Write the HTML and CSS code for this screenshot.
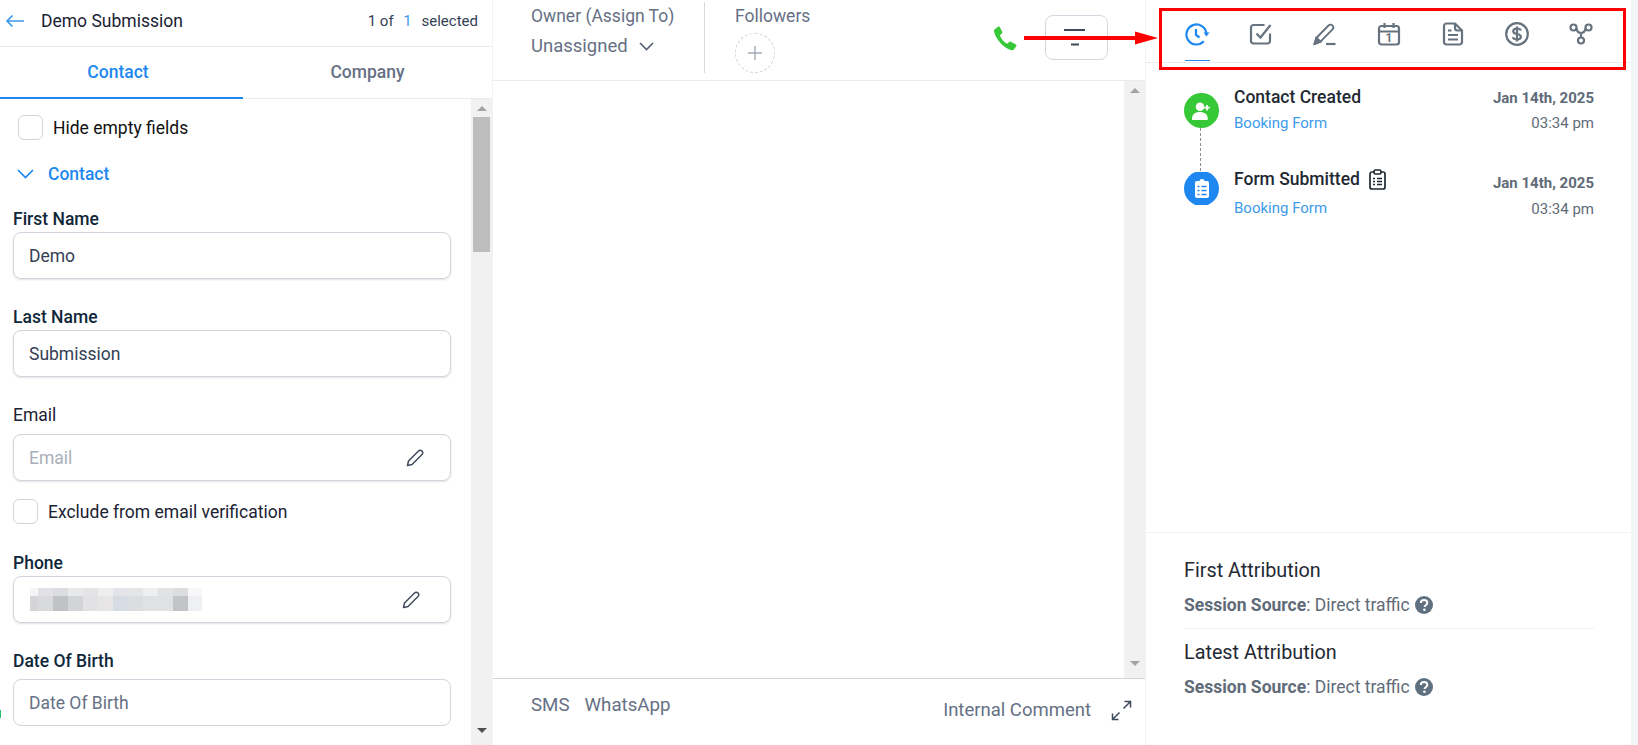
FILE: index.html
```html
<!DOCTYPE html>
<html lang="en">
<head>
    <meta charset="UTF-8">
    <meta name="viewport" content="width=device-width, initial-scale=1.0">
    <title>Contact Details</title>
    <link rel="stylesheet" href="styles.css">
</head>
<body>
    <div class="page">
        <!-- Left column: contact form -->
        <aside class="contact-panel">
            <div class="contact-header">
                <svg class="back-icon" width="20" height="14" viewBox="0 0 20 14"><path d="M19 7H2M7.500 1.500 2 7l5.500 5.500" fill="none" stroke="#3d9be9" stroke-width="1.700"/></svg>
                <div class="contact-name">Demo Submission</div>
                <div class="selected-count">1 of <span class="selected-total">1</span> selected</div>
            </div>
            <div class="contact-tabs">
                <div class="contact-tab contact-tab-active">Contact</div>
                <div class="contact-tab">Company</div>
            </div>
            <div class="form-wrap">
                <div class="form-scroll">
                    <div class="hide-row">
                        <span class="checkbox"></span>
                        <span>Hide empty fields</span>
                    </div>
                    <div class="section-toggle">
                        <svg width="17" height="10" viewBox="0 0 17 10"><path d="M1 1l7.500 7.500L16 1" fill="none" stroke="#1e88f0" stroke-width="1.700"/></svg>
                        <span>Contact</span>
                    </div>
                    <div class="field field-first">
                        <div class="field-label">First Name</div>
                        <div class="field-input">Demo</div>
                    </div>
                    <div class="field field-last">
                        <div class="field-label">Last Name</div>
                        <div class="field-input">Submission</div>
                    </div>
                    <div class="field field-email">
                        <div class="field-label field-label-plain">Email</div>
                        <div class="field-input field-empty">
                            <span>Email</span>
                            <svg width="20" height="20" viewBox="0 0 20 20"><path d="M2.500 17.500l1-4.500L13.500 3c1-1 2.500-1 3.500 0s1 2.500 0 3.500L7 16.500z" fill="none" stroke="#3f4a5a" stroke-width="1.500" stroke-linejoin="round"/></svg>
                        </div>
                    </div>
                    <div class="verify-row">
                        <span class="checkbox"></span>
                        <span>Exclude from email verification</span>
                    </div>
                    <div class="field field-phone">
                        <div class="field-label">Phone</div>
                        <div class="field-input field-phone-input">
                            <span class="phone-blur"></span>
                            <svg width="20" height="20" viewBox="0 0 20 20"><path d="M2.500 17.500l1-4.500L13.500 3c1-1 2.500-1 3.500 0s1 2.500 0 3.500L7 16.500z" fill="none" stroke="#3f4a5a" stroke-width="1.500" stroke-linejoin="round"/></svg>
                        </div>
                    </div>
                    <div class="field field-dob">
                        <div class="field-label">Date Of Birth</div>
                        <div class="field-input field-date">Date Of Birth</div>
                    </div>
                </div>
                <div class="scrollbar scrollbar-form">
                    <span class="scroll-up"></span>
                    <span class="scroll-thumb"></span>
                    <span class="scroll-down"></span>
                </div>
            </div>
        </aside>

        <!-- Middle column: conversation -->
        <main class="chat-panel">
            <div class="chat-header">
                <div class="owner">
                    <div class="owner-label">Owner (Assign To)</div>
                    <div class="owner-value">
                        <span>Unassigned</span>
                        <svg width="15" height="9" viewBox="0 0 15 9"><path d="M1 1l6.500 6.500L14 1" fill="none" stroke="#56616f" stroke-width="1.600"/></svg>
                    </div>
                </div>
                <div class="followers">
                    <div class="owner-label">Followers</div>
                    <div class="follower-add">
                        <svg width="14" height="14" viewBox="0 0 14 14"><path d="M7 0v14M0 7h14" stroke="#a3aab6" stroke-width="1.400"/></svg>
                    </div>
                </div>
                <svg class="call-icon" width="25" height="25" viewBox="0 0 25 25"><path d="M1.500 3.500 5 .8c.8-.5 1.500-.3 1.900.5l2.300 4.500c.3.700.2 1.300-.4 1.800L6.900 9.200c1 3.200 4 7 7.300 8.600l1.900-1.800c.6-.5 1.200-.6 1.800-.2l4.900 2.600c.8.400.9 1.200.4 1.900l-2.400 3.300c-.5.700-1.300.9-2.200.7C10.500 21.800 2.900 13.300 1 5.400c-.1-.8 0-1.400.5-1.900z" fill="#37c837"/></svg>
                <div class="filter-btn">
                    <svg width="22" height="17" viewBox="0 0 22 17"><path d="M0 1h21M7 15.500h8" stroke="#3f4a5a" stroke-width="2"/></svg>
                </div>
            </div>
            <div class="chat-body">
                <div class="chat-messages"></div>
                <div class="scrollbar scrollbar-chat">
                    <span class="scroll-up"></span>
                    <span class="scroll-down"></span>
                </div>
            </div>
            <div class="chat-footer">
                <div class="channel-list">
                    <span>SMS</span>
                    <span>WhatsApp</span>
                </div>
                <div class="comment-link">Internal Comment</div>
                <svg class="expand-icon" width="21" height="21" viewBox="0 0 21 21"><path d="M13.500 1.500h6v6M19.500 1.500l-7 7M7.500 19.500h-6v-6M1.500 19.500l7-7" fill="none" stroke="#3f4a5a" stroke-width="1.500"/></svg>
            </div>
        </main>

        <!-- Right column: activity -->
        <section class="activity-panel">
            <div class="activity-tabs">
                <div class="activity-tab activity-tab-active">
                    <svg width="26" height="26" viewBox="0 0 26 26" fill="none" stroke="#1e88f0" stroke-width="2.200"><path d="M19.800 19.300A10 10 0 1 1 22.400 11.500"/><path d="M12 7v6l3.500 2.500"/><path d="M19.500 10.500h6l-3 4z" fill="#1e88f0" stroke="none"/></svg>
                </div>
                <div class="activity-tab">
                    <svg width="24" height="24" viewBox="0 0 24 24" fill="none" stroke="#66727e" stroke-width="2.200"><path d="M21 11.500V19a2.500 2.500 0 0 1-2.500 2.500H4.500A2.500 2.500 0 0 1 2 19V5.500A2.500 2.500 0 0 1 4.500 3h11"/><path d="M7.500 11.500l4 4L21.500 3"/></svg>
                </div>
                <div class="activity-tab">
                    <svg width="24" height="24" viewBox="0 0 24 24" fill="none" stroke="#66727e" stroke-width="1.900"><path d="M1.500 22l1.800-6L15.500 3.500c1.200-1.200 3-1.200 4 0s1 2.800 0 3.800L7.500 19.700z" stroke-linejoin="round"/><path d="M3.300 16l4.200 3.700"/><path d="M1.500 22l1.800-6 4.200 3.700z" fill="#66727e"/><path d="M13 22h9.500" stroke-width="2.200"/></svg>
                </div>
                <div class="activity-tab">
                    <svg width="24" height="24" viewBox="0 0 24 24" fill="none" stroke="#66727e" stroke-width="2.200"><rect x="2" y="4" width="20" height="18.500" rx="2.500"/><path d="M2 9.500h20M7.500 1v5M16.500 1v5"/><text x="12" y="19.800" text-anchor="middle" class="calendar-day">1</text></svg>
                </div>
                <div class="activity-tab">
                    <svg width="24" height="24" viewBox="0 0 24 24" fill="none" stroke="#66727e" stroke-width="2.200"><path d="M5.500 1.500H14l7 7v11.500a2.500 2.500 0 0 1-2.500 2.500h-13A2.500 2.500 0 0 1 3 20V4a2.500 2.500 0 0 1 2.500-2.500z" stroke-linejoin="round"/><path d="M14 1.500V6a2.500 2.500 0 0 0 2.500 2.500H21M7 8.500h3.500M7 13h10M7 17.500h10"/></svg>
                </div>
                <div class="activity-tab">
                    <svg width="24" height="24" viewBox="0 0 24 24" fill="none" stroke="#66727e" stroke-width="2.200"><circle cx="12" cy="12" r="10.800"/><path d="M15.800 8.500C15.500 7 14 6.500 12 6.500c-2.200 0-3.800 1-3.800 2.800s1.600 2.300 3.800 2.700 3.900 1 3.900 2.800-1.700 2.700-3.900 2.700-3.700-.8-4-2.400M12 4.500v15"/></svg>
                </div>
                <div class="activity-tab">
                    <svg width="24" height="24" viewBox="0 0 24 24" fill="none" stroke="#66727e" stroke-width="2.200"><circle cx="4.500" cy="5.500" r="3"/><circle cx="19.500" cy="5.500" r="3"/><circle cx="12" cy="18.500" r="3"/><path d="M7.500 6.500c.5 3 2.500 4.500 4.500 4.500s4-1.500 4.500-4.500M12 11v4.500"/></svg>
                </div>
            </div>
            <div class="timeline">
                <div class="event">
                    <div class="event-track">
                        <div class="event-badge event-badge-green">
                            <svg width="20" height="18" viewBox="0 0 20 18" fill="#fff"><circle cx="8" cy="4.800" r="4.300"/><path d="M0 17c0-4.500 3-7 7.800-7s8 2.500 8 7c0 .6-.4 1-1 1H1c-.6 0-1-.4-1-1z"/><path d="M15 3v5.500M12.300 5.700h5.500" stroke="#fff" stroke-width="1.800"/></svg>
                        </div>
                        <div class="event-line"></div>
                    </div>
                    <div class="event-info">
                        <div class="event-title">Contact Created</div>
                        <div class="event-source">Booking Form</div>
                    </div>
                    <div class="event-time">
                        <div class="event-date">Jan 14th, 2025</div>
                        <div class="event-hour">03:34 pm</div>
                    </div>
                </div>
                <div class="event event-second">
                    <div class="event-track">
                        <div class="event-badge event-badge-blue">
                            <svg width="14" height="19" viewBox="0 0 14 19"><path d="M2 2h2.500a2.500 2 0 0 1 5 0H12a2 2 0 0 1 2 2v13a2 2 0 0 1-2 2H2a2 2 0 0 1-2-2V4a2 2 0 0 1 2-2z" fill="#fff"/><path d="M2.500 7.500h2M6.500 7.500h5M2.500 11.500h2M6.500 11.500h5M2.500 15.500h2M6.500 15.500h5" stroke="#1e88f0" stroke-width="1.700"/></svg>
                        </div>
                    </div>
                    <div class="event-info">
                        <div class="event-title">Form Submitted
                            <svg width="17" height="21" viewBox="0 0 17 21" fill="none" stroke="#1f2933" stroke-width="1.700"><path d="M5 3H3a2 2 0 0 0-2 2v13a2 2 0 0 0 2 2h11a2 2 0 0 0 2-2V5a2 2 0 0 0-2-2h-2"/><rect x="5" y="1" width="7" height="4" rx="1.500"/><path d="M4 9.500h2M8 9.500h5M4 12.500h2M8 12.500h5M4 15.500h2M8 15.500h5"/></svg>
                        </div>
                        <div class="event-source">Booking Form</div>
                    </div>
                    <div class="event-time">
                        <div class="event-date">Jan 14th, 2025</div>
                        <div class="event-hour">03:34 pm</div>
                    </div>
                </div>
            </div>
            <div class="attribution">
                <div class="attribution-block attribution-first">
                    <div class="attribution-title">First Attribution</div>
                    <div class="attribution-row">
                        <span><b>Session Source</b>: Direct traffic</span>
                        <svg width="18" height="18" viewBox="0 0 18 18"><circle cx="9" cy="9" r="9" fill="#5f7180"/><path d="M5.800 7c0-2 1.500-3 3.300-3s3.200 1 3.200 2.800c0 2.400-2.700 2.300-2.700 4.200" fill="none" stroke="#fff" stroke-width="2"/><circle cx="9.400" cy="13.800" r="1.300" fill="#fff"/></svg>
                    </div>
                </div>
                <div class="attribution-block">
                    <div class="attribution-title">Latest Attribution</div>
                    <div class="attribution-row">
                        <span><b>Session Source</b>: Direct traffic</span>
                        <svg width="18" height="18" viewBox="0 0 18 18"><circle cx="9" cy="9" r="9" fill="#5f7180"/><path d="M5.800 7c0-2 1.500-3 3.300-3s3.200 1 3.200 2.800c0 2.400-2.700 2.300-2.700 4.200" fill="none" stroke="#fff" stroke-width="2"/><circle cx="9.400" cy="13.800" r="1.300" fill="#fff"/></svg>
                    </div>
                </div>
            </div>
        </section>
    </div>

    <!-- Red markup drawn on top of the screenshot -->
    <div class="markup-box"></div>
    <svg class="markup-arrow" width="134" height="14" viewBox="0 0 134 14"><path d="M0 5h112v4H0z" fill="#f00"/><path d="M111 .5 134 7l-23 6.500z" fill="#f00"/></svg>
    <span class="edge-mark"></span>
</body>
</html>
```

FILE: styles.css
```css
* {
    box-sizing: border-box;
}

body {
    margin: 0;
    height: 745px;
    overflow: hidden;
    background-color: #fff;
    font-family: 'Roboto', sans-serif;
    font-size: 17.5px;
    color: #1f2933;
}

.page {
    display: flex;
    height: 745px;
}

/* Left column */
.contact-panel {
    width: 493px;
    display: flex;
    flex-direction: column;
    border-right: 1px solid #f1f2f4;
}

.contact-header {
    height: 47px;
    display: flex;
    align-items: center;
    padding: 0 14px 4px 5px;
    border-bottom: 1px solid #e9ecef;
}

.back-icon {
    margin-right: 16px;
}

.contact-name {
    color: #1a2233;
}

.selected-count {
    margin-left: auto;
    font-size: 15px;
    color: #344054;
}

.selected-total {
    color: #3d9be9;
    margin: 0 6px;
}

.contact-tabs {
    height: 52px;
    display: flex;
    border-bottom: 1px solid #e9ecef;
}

.contact-tab {
    width: 243px;
    height: 52px;
    padding: 0 0 2px 6px;
    display: flex;
    align-items: center;
    justify-content: center;
    font-weight: 500;
    color: #667085;
}

.contact-tab-active {
    color: #1e88f0;
    padding: 0 7px 0 0;
    border-bottom: 2px solid #1e88f0;
}

.form-wrap {
    flex: 1;
    display: flex;
    min-height: 0;
}

.form-scroll {
    flex: 1;
    padding: 16px 0 0 13px;
    overflow: hidden;
}

.hide-row {
    display: flex;
    align-items: center;
    gap: 10px;
    margin-left: 5px;
    height: 25px;
    color: #111;
}

.checkbox {
    width: 25px;
    height: 25px;
    border: 1px solid #d0d5dd;
    border-radius: 6px;
    background-color: #fff;
}

.section-toggle {
    display: flex;
    align-items: center;
    gap: 14px;
    margin: 22px 0 0 4px;
    height: 24px;
    color: #1e88f0;
    font-weight: 500;
}

.field-label {
    height: 20px;
    line-height: 20px;
    font-weight: 500;
    color: #10273a;
}

.field-label-plain {
    font-weight: 400;
    color: #1a2233;
}

.field-first {
    margin-top: 23px;
}

.field-last {
    margin-top: 28px;
}

.field-email {
    margin-top: 28px;
}

.field-phone {
    margin-top: 29px;
}

.field-dob {
    margin-top: 28px;
}

.field-input {
    width: 438px;
    height: 47px;
    margin-top: 3px;
    padding: 0 25px 0 15px;
    display: flex;
    align-items: center;
    justify-content: space-between;
    border: 1px solid #d0d5dd;
    border-radius: 8px;
    box-shadow: 0 1px 2px rgba(16, 24, 40, 0.12);
    color: #344054;
}

.field-email .field-input {
    margin-top: 9px;
}

.field-dob .field-input {
    margin-top: 8px;
    box-shadow: none;
    color: #667085;
}

.field-empty {
    color: #a9b0ba;
}

.field-phone-input {
    padding-right: 29px;
    padding-left: 16px;
}

.verify-row {
    display: flex;
    align-items: center;
    gap: 10px;
    height: 25px;
    margin-top: 18px;
    color: #1a2233;
}

/* Pixelated phone number */
.phone-blur {
    width: 172px;
    height: 23px;
    background-repeat: no-repeat;
    background-size: 100% 8px, 100% 15px;
    background-position: 0 0, 0 8px;
    background-image:
        linear-gradient(90deg, #f5f5f7 8px, #e2e2e6 8px 23px, #dcdde0 23px 38px, #e8e9eb 38px 53px, #e4e4e6 53px 68px, #eeeef0 68px 83px, #e2e4e9 83px 98px, #e4e5e7 98px 113px, #eeeff0 113px 128px, #e2e3e5 128px 143px, #dcdddf 143px 158px, #f8f8fa 158px),
        linear-gradient(90deg, #d5d5d7 8px, #d8dadc 8px 23px, #c0c2c5 23px 38px, #d3d4d8 38px 53px, #e2e2e4 53px 68px, #e8e5e6 68px 83px, #d7dbe4 83px 98px, #dcdde0 98px 113px, #e0e1e3 113px 143px, #c2c4c7 143px 158px, #eff0f4 158px);
}

/* Scrollbars */
.scrollbar {
    width: 21px;
    display: flex;
    flex-direction: column;
    align-items: center;
    background-color: #f1f1f1;
}

.scroll-up,
.scroll-down {
    width: 0;
    height: 0;
    border-left: 5px solid transparent;
    border-right: 5px solid transparent;
}

.scroll-up {
    margin-top: 7px;
    border-bottom: 5px solid #a3a3a3;
}

.scroll-down {
    margin-top: auto;
    margin-bottom: 12px;
    border-top: 5px solid #505050;
}

.scrollbar-chat .scroll-down {
    border-top-color: #a3a3a3;
}

.scroll-thumb {
    width: 17px;
    height: 135px;
    margin-top: 6px;
    background-color: #bdbdbd;
}

/* Middle column */
.chat-panel {
    width: 653px;
    display: flex;
    flex-direction: column;
    border-right: 1px solid #f1f2f4;
}

.chat-header {
    height: 81px;
    display: flex;
    padding-top: 2px;
    border-bottom: 1px solid #e9ecef;
    color: #667085;
}

.owner {
    width: 212px;
    height: 71px;
    padding-left: 38px;
    border-right: 1px solid #d8dce2;
}

.owner-label {
    line-height: 20px;
    margin-top: 4px;
}

.owner-value {
    display: flex;
    align-items: center;
    gap: 11px;
    margin-top: 9px;
    height: 22px;
    font-size: 18.5px;
}

.followers {
    margin-left: 30px;
}

.follower-add {
    width: 40px;
    height: 40px;
    margin-top: 7px;
    display: flex;
    align-items: center;
    justify-content: center;
    border: 1px dashed #d0d5dd;
    border-radius: 50%;
}

.call-icon {
    margin: 24px 0 0 auto;
}

.filter-btn {
    width: 63px;
    height: 45px;
    margin: 13px 37px 0 27px;
    padding: 13px 0 0 18px;
    border: 1px solid #d5d8e0;
    border-radius: 8px;
}

.chat-body {
    flex: 1;
    display: flex;
    min-height: 0;
    border-bottom: 1px solid #d0d5dd;
}

.chat-messages {
    flex: 1;
}

.chat-footer {
    height: 66px;
    display: flex;
    padding-left: 38px;
    color: #667085;
}

.channel-list {
    display: flex;
    gap: 15px;
    margin-top: 15px;
    line-height: 22px;
    height: 22px;
    font-size: 18.7px;
}

.comment-link {
    margin: 20px 0 0 auto;
    line-height: 22px;
    height: 22px;
    font-size: 18.5px;
}

.expand-icon {
    margin: 21px 13px 0 20px;
}

/* Right column */
.activity-panel {
    flex: 1;
    display: flex;
    flex-direction: column;
    margin-right: 7px;
    box-shadow: 7px 0 0 #f3f6f8;
}

.activity-tabs {
    height: 63px;
    display: flex;
    padding-left: 19px;
    border-bottom: 1px solid #e9ecef;
}

.activity-tab {
    width: 64px;
    height: 61px;
    padding-top: 22px;
    display: flex;
    justify-content: center;
}

.activity-tab-active {
    background: linear-gradient(#1e88f0, #1e88f0) no-repeat center bottom / 25px 1px;
}

.calendar-day {
    font-family: 'Roboto', sans-serif;
    font-size: 12px;
    font-weight: 700;
    fill: #66727e;
    stroke: none;
}

.timeline {
    height: 470px;
    padding: 23px 37px 0 38px;
    border-bottom: 1px solid #f0f2f4;
}

.event {
    display: flex;
}

.event-track {
    width: 35px;
    padding-top: 7px;
}

.event-badge {
    width: 35px;
    height: 35px;
    display: flex;
    align-items: center;
    justify-content: center;
    border-radius: 50%;
}

.event-badge-green {
    background-color: #37c837;
}

.event-badge-blue {
    background-color: #1e88f0;
    clip-path: inset(1px 0 1px 0);
}

.event-line {
    width: 0;
    height: 43px;
    margin-left: 16px;
    border-left: 1px dashed #8a8f96;
}

.event-second .event-track {
    padding-top: 0;
}

.event-info {
    flex: 1;
    margin-left: 15px;
}

.event-second .event-info {
    margin-top: -3px;
}

.event-title {
    display: flex;
    align-items: center;
    gap: 9px;
    height: 22px;
    font-weight: 500;
    color: #1f2933;
}

.event-source {
    margin-top: 4px;
    line-height: 22px;
    font-size: 15px;
    color: #3d9be9;
}

.event-second .event-source {
    margin-top: 7px;
}

.event-time {
    text-align: right;
    font-size: 15px;
    color: #5f6b78;
}

.event-date {
    margin-top: 1px;
    line-height: 22px;
    font-weight: 700;
}

.event-hour {
    margin-top: 3px;
    line-height: 22px;
}

.event-second .event-hour {
    margin-top: 4px;
}

.attribution {
    padding: 0 37px 0 38px;
}

.attribution-block {
    padding-top: 13px;
}

.attribution-first {
    padding-top: 27px;
    padding-bottom: 12px;
    border-bottom: 1px solid #f0f2f4;
}

.attribution-title {
    height: 22px;
    line-height: 22px;
    font-size: 19.8px;
    color: #1f2933;
}

.attribution-row {
    display: flex;
    align-items: center;
    gap: 5px;
    margin-top: 12px;
    height: 22px;
    color: #5f6b78;
}

/* Red markup */
.markup-box {
    position: absolute;
    left: 1159px;
    top: 8px;
    width: 467px;
    height: 62px;
    border: 3px solid #f00;
}

.markup-arrow {
    position: absolute;
    left: 1024px;
    top: 31px;
}

.edge-mark {
    position: absolute;
    left: 0;
    top: 710px;
    width: 1px;
    height: 8px;
    background-color: #2bbf6a;
}
```
